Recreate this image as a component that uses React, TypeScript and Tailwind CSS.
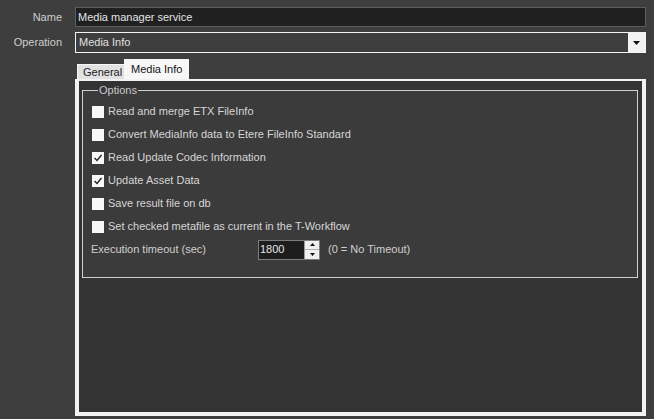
import React from "react";

const items = [
  { label: "Read and merge ETX FileInfo", checked: false },
  { label: "Convert MediaInfo data to Etere FileInfo Standard", checked: false },
  { label: "Read Update Codec Information", checked: true },
  { label: "Update Asset Data", checked: true },
  { label: "Save result file on db", checked: false },
  { label: "Set checked metafile as current in the T-Workflow", checked: false },
];

function Check({ checked }: { checked: boolean }) {
  return (
    <div className="w-[12px] h-[12px] bg-[#f8f8f8] flex items-center justify-center shrink-0">
      {checked && (
        <svg width="10" height="10" viewBox="0 0 10 10">
          <path d="M1.5 5 L4 7.5 L8.5 2" fill="none" stroke="#222" strokeWidth="1.4" />
        </svg>
      )}
    </div>
  );
}

export default function App() {
  return (
    <div
      className="w-[654px] h-[419px] bg-[#3e3e3e] text-[11px] text-[#cdcdcd] flex flex-col overflow-hidden"
      style={{ fontFamily: '"Liberation Sans", Arial, sans-serif' }}
    >
      {/* Name row */}
      <div className="flex items-center mt-[7px] h-[20px]">
        <div className="w-[62px] text-right">Name</div>
        <div className="ml-[13px] w-[571px] h-[20px] bg-[#202020] border border-[#5c5c5c] flex items-center pl-[2px] text-[#e4e4e4]">
          Media manager service
        </div>
      </div>
      {/* Operation row */}
      <div className="flex items-center mt-[5px] h-[21px]">
        <div className="w-[62px] text-right">Operation</div>
        <div className="ml-[13px] w-[571px] h-[21px] border border-[#f4f4f4] flex items-stretch">
          <div className="flex-1 flex items-center pl-[3px] text-[#e0e0e0]">Media Info</div>
          <div className="w-[17px] bg-[#f2f2f2] flex items-center justify-center">
            <svg width="7" height="4" viewBox="0 0 7 4">
              <path d="M0 0 H7 L3.5 4 Z" fill="#111" />
            </svg>
          </div>
        </div>
      </div>
      {/* Tabs */}
      <div className="ml-[75px] mt-[6px] w-[571px] flex flex-col">
        <div className="flex items-end h-[20px] pl-[2px]">
          <div className="h-[15px] w-[47px] bg-[#e2e2e2] text-[#1a1a1a] flex items-center pl-[5px] border-l border-t border-[#f6f6f6]">
            General
          </div>
          <div className="h-[20px] w-[65px] bg-[#f7f7f7] text-[#111] flex items-center pl-[7px]">
            Media Info
          </div>
        </div>
        <div className="h-[337px] border-t-2 border-l-[4px] border-r-[4px] border-b-[4px] border-[#f2f2f2] bg-[#333333] pt-[3px] pl-[3px] pr-[4px]">
          <fieldset className="border border-[#cfcfcf] bg-[#3b3b3b] pl-[8px] pb-[16px]">
            <legend className="ml-[7px] px-[1px] leading-[13px] text-[#c8c8c8]">Options</legend>
            <div className="flex flex-col pt-[3px]">
              {items.map((it) => (
                <div key={it.label} className="h-[23px] flex items-center gap-[4px] pl-[1px] text-[#d6d6d6]">
                  <Check checked={it.checked} />
                  <span>{it.label}</span>
                </div>
              ))}
              <div className="h-[23px] flex items-center text-[#d0d0d0]">
                <div className="w-[167px]">Execution timeout (sec)</div>
                <div className="w-[62px] h-[20px] border border-[#7d7d7d] flex">
                  <div className="flex-1 bg-[#1d1d1d] text-[#e6e6e6] flex items-center pl-[1px]">1800</div>
                  <div className="w-[15px] bg-[#efefef] flex flex-col border-l border-[#9a9a9a]">
                    <div className="flex-1 flex items-center justify-center border-b border-[#b0b0b0]">
                      <svg width="5" height="3" viewBox="0 0 5 3"><path d="M0 3 H5 L2.5 0 Z" fill="#111" /></svg>
                    </div>
                    <div className="flex-1 flex items-center justify-center">
                      <svg width="5" height="3" viewBox="0 0 5 3"><path d="M0 0 H5 L2.5 3 Z" fill="#111" /></svg>
                    </div>
                  </div>
                </div>
                <div className="ml-[8px]">(0 = No Timeout)</div>
              </div>
            </div>
          </fieldset>
        </div>
      </div>
    </div>
  );
}
